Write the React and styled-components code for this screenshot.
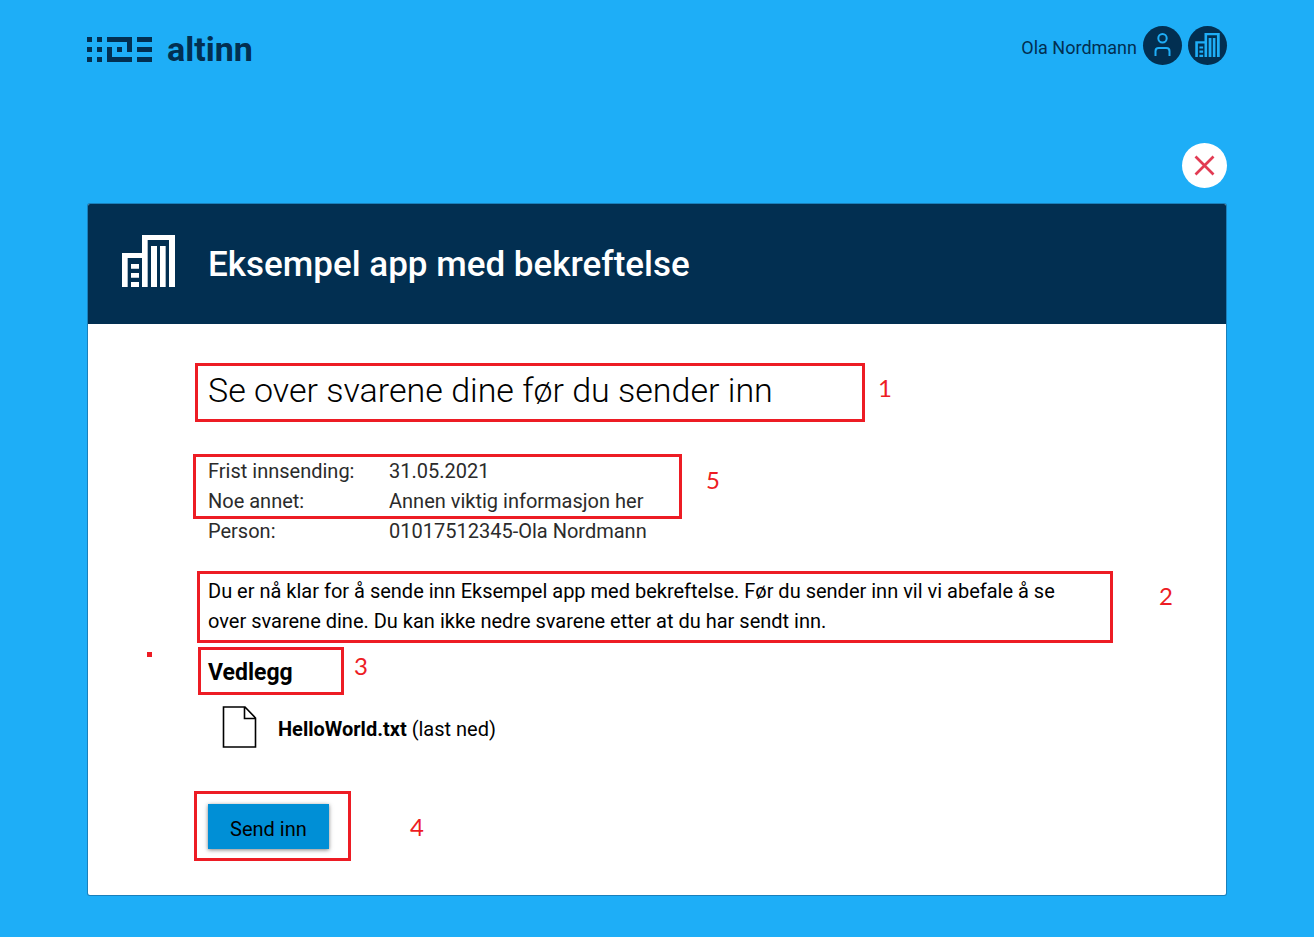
import React from "react";
import styled, { createGlobalStyle } from "styled-components";

const NAVY = "#022f51";
const RED = "#ed1c24";

const GlobalStyle = createGlobalStyle`
  *, *::before, *::after { box-sizing: border-box; }
  body {
    margin: 0;
    background: #1eaef7;
    color: #000;
    font-family: Roboto, "Liberation Sans", sans-serif;
    font-size: 20px;
    line-height: 30px;
  }
`;

const Page = styled.div`
  max-width: 1188px;
  margin: 0 auto;
  padding: 26px 24px 42px;
`;

const TopBar = styled.header`
  display: flex;
  align-items: flex-start;
  justify-content: space-between;
`;

const Brand = styled.a`
  display: flex;
  align-items: center;
  gap: 15px;
  padding-top: 3px;
  color: ${NAVY};
  font-size: 34px;
  line-height: 40px;
  font-weight: 700;
  text-decoration: none;
`;

const UserArea = styled.div`
  display: flex;
  align-items: center;
  gap: 6px;
  color: ${NAVY};
  font-size: 18px;
`;

const UserName = styled.span`
  padding-top: 4px;
`;

const Avatar = styled.button`
  display: flex;
  align-items: center;
  justify-content: center;
  width: 39px;
  height: 39px;
  padding: 0 0 2px;
  border: 0;
  border-radius: 50%;
  background: ${NAVY};
  color: #1eaef7;
`;

const CloseRow = styled.div`
  display: flex;
  justify-content: flex-end;
  padding: 74px 0 16px;
`;

const CloseButton = styled.button`
  display: flex;
  align-items: center;
  justify-content: center;
  width: 45px;
  height: 45px;
  padding: 0;
  border: 0;
  border-radius: 50%;
  background: #fff;
  color: #e23b53;
`;

const Card = styled.main`
  margin: 0 1px;
  border-radius: 2px;
  background: #fff;
  box-shadow: 0 0 0 1px #1a80bb;
  overflow: hidden;
`;

const CardHeader = styled.div`
  display: flex;
  align-items: flex-start;
  gap: 33px;
  padding: 31px 34px 29px;
  background: ${NAVY};
  color: #fff;
`;

const AppTitle = styled.h1`
  margin: 0;
  font-size: 35px;
  line-height: 60px;
  font-weight: 500;
`;

const CardBody = styled.div`
  padding: 42px 140px 46px 120px;
`;

const Section = styled.section`
  position: relative;
  margin-bottom: ${(p) => p.$after}px;
`;

const Heading = styled.h2`
  margin: 0;
  font-size: 34px;
  line-height: 48px;
  font-weight: 300;
`;

const InfoTable = styled.table`
  border-collapse: collapse;
  color: #2b2b2b;
`;

const InfoLabel = styled.th`
  width: 181px;
  padding: 0;
  text-align: left;
  font-weight: 400;
`;

const InfoValue = styled.td`
  padding: 0;
`;

const Paragraph = styled.p`
  margin: 0;
`;

const SubHeading = styled.h3`
  margin: 0;
  font-size: 23px;
  line-height: 32px;
  font-weight: 700;
`;

const Attachment = styled.a`
  display: flex;
  align-items: center;
  gap: 21px;
  padding-left: 14px;
  color: #000;
  text-decoration: none;
`;

const AttachmentName = styled.span`
  padding-top: 4px;
`;

const SubmitButton = styled.button`
  display: block;
  height: 45px;
  padding: 4px 22px 0;
  border: 0;
  background: #008fd6;
  box-shadow: 0 1px 4px rgba(0, 0, 0, 0.5);
  color: #000;
  font-family: inherit;
  font-size: 20px;
`;

const Outline = styled.span`
  position: absolute;
  top: ${(p) => p.$top}px;
  left: ${(p) => p.$left}px;
  width: ${(p) => p.$width}px;
  height: ${(p) => p.$height}px;
  border: 3px solid ${RED};
  pointer-events: none;
`;

const Marker = styled.span`
  position: absolute;
  top: ${(p) => p.$top}px;
  left: ${(p) => p.$left}px;
  color: ${RED};
  font-family: Lato, sans-serif;
  font-size: 24px;
  line-height: 30px;
`;

const Dot = styled.span`
  position: absolute;
  top: -5px;
  left: -61px;
  width: 5px;
  height: 5px;
  background: ${RED};
`;

function LogoMark() {
  return (
    <svg width="65" height="25" viewBox="0 0 65 25" fill="currentColor" shapeRendering="crispEdges" aria-hidden="true">
      <path d="M0 0h5v5H0zM0 10h5v5H0zM0 20h5v5H0zM10 0h5v5h-5zM10 10h5v5h-5zM10 20h5v5h-5z" />
      <path d="M20 0h25v15h-5V5H20zM20 10h5v10h20v5H20zM30 10h5v5h-5z" />
      <path d="M50 0h15v5H50zM50 10h15v5H50zM50 20h15v5H50z" />
    </svg>
  );
}

function BuildingIcon({ width, height }) {
  return (
    <svg width={width} height={height} viewBox="0 0 159 156" fill="currentColor" aria-hidden="true">
      <path d="M0 156V54H60V0H159V156H141V15H77V156H60V69H17V156Z" />
      <path d="M87 33h18v123H87zM114 33h17v123h-17z" />
      <path d="M27 87h24v14H27zM27 114h24v14H27zM27 141h24v15H27z" />
    </svg>
  );
}

function PersonIcon() {
  return (
    <svg width="17" height="23" viewBox="0 0 17 23" fill="none" stroke="currentColor" strokeWidth="2" aria-hidden="true">
      <circle cx="8.5" cy="5.2" r="4.2" />
      <path d="M1.5 23V18.2Q1.5 15 4.7 15H12.3Q15.5 15 15.5 18.2V23" />
    </svg>
  );
}

function CrossIcon() {
  return (
    <svg width="21" height="21" viewBox="0 0 21 21" fill="none" stroke="currentColor" strokeWidth="2.7" aria-hidden="true">
      <path d="M1.5 1.5L19.5 19.5M19.5 1.5L1.5 19.5" />
    </svg>
  );
}

function FileIcon() {
  return (
    <svg width="35" height="42" viewBox="0 0 35 42" fill="none" stroke="currentColor" strokeWidth="1.6" aria-hidden="true">
      <path d="M1.5 1H23L33.5 12V41H1.5ZM22.5 1V12.5H33.5" />
    </svg>
  );
}

const details = [
  ["Frist innsending:", "31.05.2021"],
  ["Noe annet:", "Annen viktig informasjon her"],
  ["Person:", "01017512345-Ola Nordmann"],
];

export default function App() {
  return (
    <Page>
      <GlobalStyle />
      <TopBar>
        <Brand href="#">
          <LogoMark />
          altinn
        </Brand>
        <UserArea>
          <UserName>Ola Nordmann</UserName>
          <Avatar aria-label="Person">
            <PersonIcon />
          </Avatar>
          <Avatar aria-label="Virksomhet">
            <BuildingIcon width={25} height={24} />
          </Avatar>
        </UserArea>
      </TopBar>

      <CloseRow>
        <CloseButton aria-label="Lukk">
          <CrossIcon />
        </CloseButton>
      </CloseRow>

      <Card>
        <CardHeader>
          <BuildingIcon width={53} height={52} />
          <AppTitle>Eksempel app med bekreftelse</AppTitle>
        </CardHeader>
        <CardBody>
          <Section $after={42}>
            <Heading>Se over svarene dine før du sender inn</Heading>
            <Outline $top={-3} $left={-13} $width={670} $height={59} />
            <Marker $top={7} $left={670}>1</Marker>
          </Section>

          <Section $after={30}>
            <InfoTable>
              <tbody>
                {details.map(([label, value]) => (
                  <tr key={label}>
                    <InfoLabel scope="row">{label}</InfoLabel>
                    <InfoValue>{value}</InfoValue>
                  </tr>
                ))}
              </tbody>
            </InfoTable>
            <Outline $top={-2} $left={-15} $width={489} $height={65} />
            <Marker $top={9} $left={498}>5</Marker>
          </Section>

          <Section $after={21}>
            <Paragraph>
              Du er nå klar for å sende inn Eksempel app med bekreftelse. Før du sender inn vil vi
              abefale å se over svarene dine. Du kan ikke nedre svarene etter at du har sendt inn.
            </Paragraph>
            <Outline $top={-5} $left={-11} $width={916} $height={72} />
            <Marker $top={5} $left={951}>2</Marker>
          </Section>

          <Section $after={17}>
            <SubHeading>Vedlegg</SubHeading>
            <Outline $top={-10} $left={-10} $width={146} $height={48} />
            <Marker $top={-6} $left={146}>3</Marker>
            <Dot />
          </Section>

          <Section $after={56}>
            <Attachment href="#">
              <FileIcon />
              <AttachmentName>
                <b>HelloWorld.txt</b> (last ned)
              </AttachmentName>
            </Attachment>
          </Section>

          <Section $after={0}>
            <SubmitButton type="button">Send inn</SubmitButton>
            <Outline $top={-13} $left={-14} $width={157} $height={70} />
            <Marker $top={8} $left={202}>4</Marker>
          </Section>
        </CardBody>
      </Card>
    </Page>
  );
}
